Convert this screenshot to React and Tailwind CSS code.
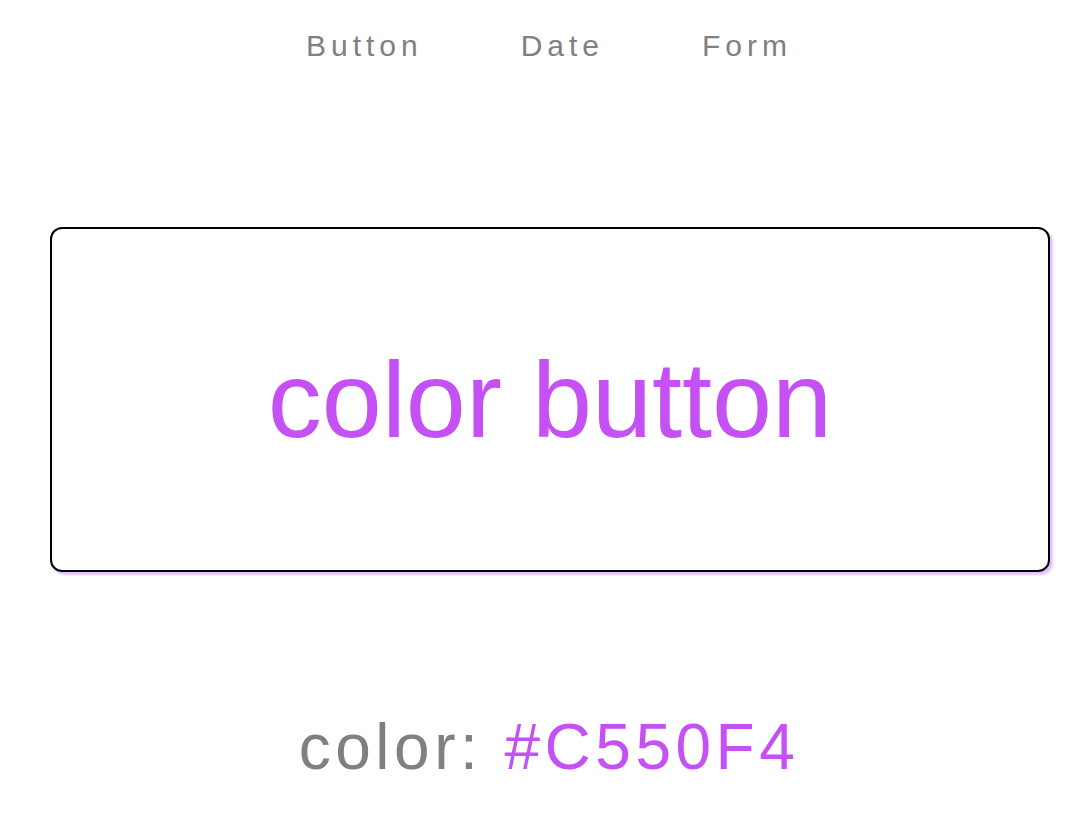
import React from "react";

const App = () => {
  const color = "#C550F4";
  return (
    <div className="min-h-screen bg-white font-['Liberation_Sans',Arial,sans-serif]">
      <nav className="flex justify-center gap-[98px] pt-[26px] pl-[6px]">
        {["Button", "Date", "Form"].map((item) => (
          <a key={item} className="text-[30px] leading-[40px] tracking-[5px] text-[#808080]">
            {item}
          </a>
        ))}
      </nav>

      <div className="pt-[161px] pl-[50px]">
        <button className="flex h-[345px] w-[1000px] items-center justify-center rounded-[12px] border-2 border-black bg-white shadow-[3px_3px_2px_#e6c2fb]">
          <span className="text-[108px] leading-none text-[#C550F4]">color button</span>
        </button>
      </div>

      <p className="mt-[143px] pl-[6px] text-center text-[64px] leading-none tracking-[4.5px] text-[#808080]">
        color: <span style={{ color }}>{color}</span>
      </p>
    </div>
  );
};

export default App;
